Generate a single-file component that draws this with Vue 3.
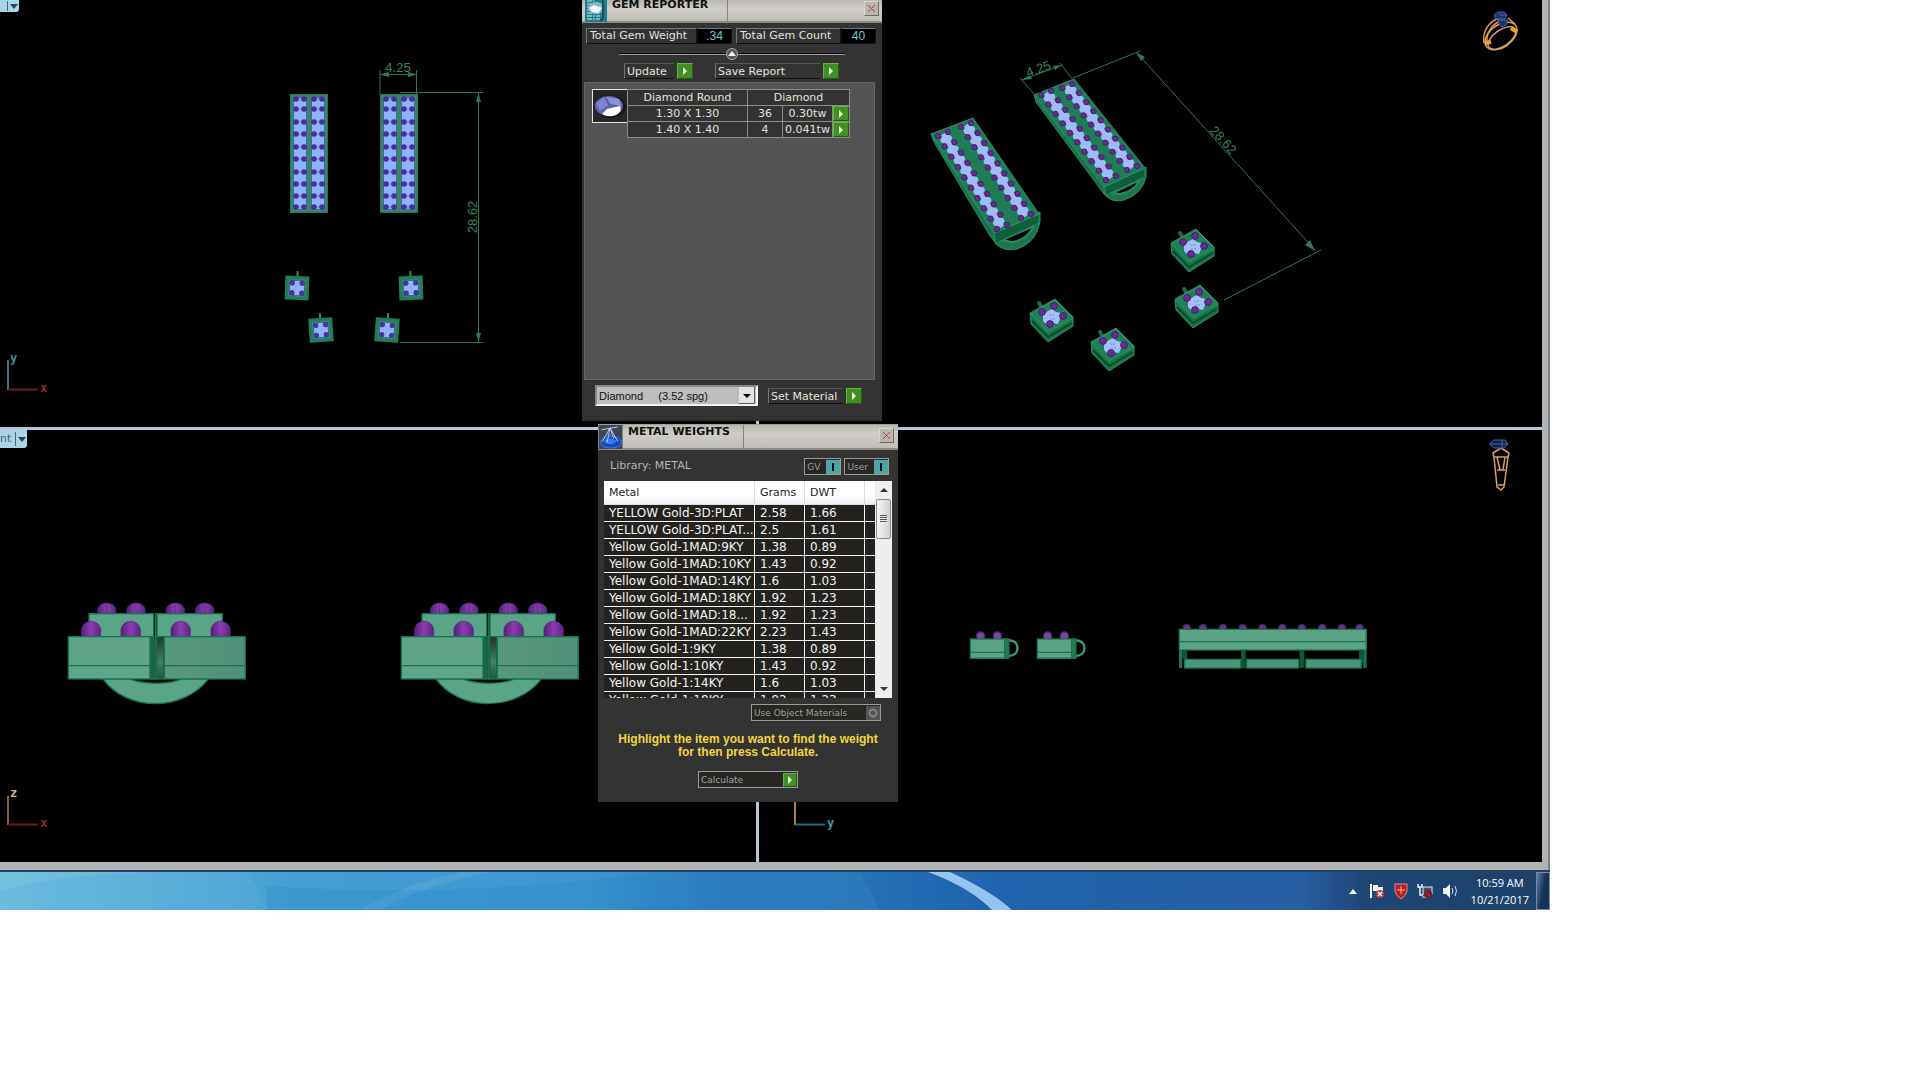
<template>
  <div class="desktop">
    <main class="cad-window">
      <div class="viewports">
        <!-- top view -->
        <section class="pane">
          <button class="view-tab view-tab-top" aria-label="Top view menu">
            <span class="view-name"></span>
            <svg width="8" height="5"><path d="M0 0 H8 L4 5 Z" fill="#33424c" /></svg>
          </button>
          <svg viewBox="0 0 756 427" class="scene">
            <g v-for="x in [290, 380]" :key="`bar-${x}`">
              <rect :x="x" y="94" width="38" height="119" fill="#1f7d58" />
              <g v-for="c in [10, 28]" :key="`ch-${c}`">
                <rect :x="x + c - 8" y="96" width="16" height="115" fill="#3d6f80" stroke="#49907a" />
                <rect :x="x + c - 6" y="98" width="12" height="111" fill="#8db4fb" />
                <g v-for="y in topRows" :key="y">
                  <rect :x="x + c - 3" :y="y - 1" width="6" height="2" fill="#a98af2" />
                  <circle :cx="x + c - 4" :cy="y" r="2.8" fill="#44309c" />
                  <circle :cx="x + c + 4" :cy="y" r="2.8" fill="#44309c" />
                </g>
              </g>
            </g>

            <g
              v-for="s in topStuds"
              :key="`stud-${s.x}-${s.y}`"
              :transform="`translate(${s.x} ${s.y}) rotate(${s.r})`"
            >
              <path d="M0 -17 V-11" stroke="#4a7f65" stroke-width="2" />
              <rect x="-12" y="-12" width="24" height="24" fill="#1f7d58" />
              <rect x="-8" y="-8" width="16" height="16" fill="#334f86" stroke="#438a70" />
              <path d="M-3 -7 H3 V-4 H7 V4 H3 V7 H-3 V4 H-7 V-4 H-3 Z" fill="#8fb2fa" />
              <circle v-for="d in corners" :key="d.join()" :cx="d[0] * 5" :cy="d[1] * 5" r="2.7" fill="#4634a0" />
            </g>

            <g stroke="#2a7a52" fill="none">
              <path d="M380 70 V94 M416.500 70 V94 M380 74.500 H416 M400 92.500 H483 M478.500 93 V342 M400 342.500 H483" />
            </g>
            <path
              d="M380 74.500 l9 -2.500 v5 z M417 74.500 l-9 -2.500 v5 z M478.500 93 l-2.500 9 h5 z M478.500 342 l-2.500 -9 h5 z"
              fill="#2a7a52"
            />
            <text x="398" y="72" text-anchor="middle" class="dim">4.25</text>
            <text transform="translate(477 217) rotate(-90)" text-anchor="middle" class="dim">28.62</text>

            <path d="M8 360 V390" stroke="#47707a" stroke-width="2" />
            <path d="M8 389.500 H38" stroke="#6e1d1d" stroke-width="2" />
            <text x="10" y="362" class="axis" fill="#4f8b96">y</text>
            <text x="40" y="392" class="axis" fill="#962a2a">x</text>
          </svg>
        </section>

        <!-- perspective view -->
        <section class="pane">
          <svg viewBox="759 0 783 427" class="scene">
            <g v-for="(b, i) in isoBars" :key="`iso-${i}`">
              <path :d="b.ring" fill="#1c7450" stroke="#2e9366" />
              <path :d="b.hole" fill="#000" stroke="#2b8a60" stroke-width="2" />
              <path :d="b.side" fill="#16704a" stroke="#238a5e" />
              <path :d="b.end" fill="#105f3c" stroke="#23885c" />
              <path :d="b.face" fill="#1f7d55" stroke="#2b9168" />
              <g v-for="(c, k) in b.channels" :key="k">
                <path
                  :d="`M${c[0]} ${c[1]} L${c[2]} ${c[3]}`"
                  stroke="#b8acf6"
                  stroke-width="5"
                />
                <ellipse
                  v-for="(p, n) in along(c, 9, 0.5)"
                  :key="`s-${n}`"
                  :cx="p.x"
                  :cy="p.y"
                  rx="6"
                  ry="4"
                  fill="#9dbcfb"
                  :transform="`rotate(-20 ${p.x} ${p.y})`"
                />
                <g v-for="(p, n) in along(c, 10, 0)" :key="`p-${n}`" fill="#682c92" stroke="#451c70">
                  <circle :cx="p.x - 5" :cy="p.y + 2" r="2.6" />
                  <circle :cx="p.x + 5" :cy="p.y - 2" r="2.6" />
                </g>
              </g>
            </g>

            <g v-for="s in isoStuds" :key="`is-${s.x}`" :transform="`translate(${s.x} ${s.y})`">
              <path d="M-13 -14 L-10 -9" stroke="#1f6b48" stroke-width="4" stroke-linecap="round" />
              <path
                d="M-22 -4 L3 -18 L21 0 V9 L-4 25 L-21 7 Z"
                fill="#197449"
                stroke="#2a9365"
                stroke-linejoin="round"
              />
              <path d="M-20 4 L-4 20 L20 6" fill="none" stroke="#0c4a2d" stroke-width="2" />
              <path d="M-21 -3 L3 -17 L21 1 L-4 15 Z" fill="#1f8055" stroke="#2b9567" />
              <path d="M0 -8 L4 -5 L9 -4 L8 2 L6 7 L0 6 L-5 8 L-9 4 L-9 -2 L-4 -6 Z" fill="#a4bffc" />
              <path d="M-3 -2 H3 M-2 2 H3" stroke="#6b95cf" stroke-dasharray="2 1" />
              <circle
                v-for="d in studProngs"
                :key="d.join()"
                :cx="d[0]"
                :cy="d[1]"
                r="3.4"
                fill="#6a2b94"
                stroke="#451c70"
              />
            </g>

            <path
              d="M1020 78 L1035 95 M1060 63 L1073 80 M1022 80 L1062 65 M1073 78 L1140 51 M1137 53 L1315 250 M1321 250 L1224 300"
              stroke="#33775a"
              fill="none"
            />
            <path
              d="M1022 80 l8 -5 l2 4 z M1062 65 l-9 1 l2 4 z M1136 52 l9 5 l-4 4 z M1315 251 l-10 -6 l5 -5 z"
              fill="#2a7d55"
            />
            <text transform="translate(1040 73) rotate(-20)" text-anchor="middle" class="dim">4.25</text>
            <text transform="translate(1220 143) rotate(48)" text-anchor="middle" class="dim">28.62</text>

            <!-- ring preview -->
            <g fill="none" stroke="#d9a066" stroke-width="1.500">
              <ellipse cx="1501" cy="36" rx="18" ry="11" transform="rotate(-35 1501 36)" />
              <ellipse cx="1502" cy="38" rx="16" ry="8" transform="rotate(-35 1502 38)" />
              <path d="M1484 43 C1482 31 1489 21 1500 18 M1487 42 C1486 33 1492 24 1502 20 M1508 18 L1515 24" />
              <path d="M1485 43 l6 -1 M1511 28 l6 4" stroke="#f0a22c" stroke-width="4" />
            </g>
            <g fill="#1d3267" stroke="#4564ad">
              <path d="M1494 15 l4 -3 h6 l3 3 l-2 4 h-9 z" />
              <path d="M1498 20 h10 l-2 5 l-4 2 l-3 -3 z M1499 15 h8" />
            </g>
          </svg>
        </section>

        <!-- front view -->
        <section class="pane">
          <button class="view-tab" aria-label="Front view menu">
            <span class="view-name">nt</span>
            <svg width="8" height="5"><path d="M0 0 H8 L4 5 Z" fill="#33424c" /></svg>
          </button>
          <svg viewBox="0 430 756 432" class="scene">
            <defs>
              <linearGradient id="shade" x1="0" y1="0" x2="1" y2="0">
                <stop offset="0%" stop-color="#57977d" />
                <stop offset="100%" stop-color="#4f9279" />
              </linearGradient>
              <linearGradient id="slot" x1="0" y1="0" x2="0" y2="1">
                <stop offset="0%" stop-color="#24342d" />
                <stop offset="60%" stop-color="#3f8066" />
                <stop offset="100%" stop-color="#1d5b40" />
              </linearGradient>
              <linearGradient id="bead" x1="0" y1="0" x2="1" y2="0">
                <stop offset="0%" stop-color="#54217a" />
                <stop offset="50%" stop-color="#8c3cb0" />
                <stop offset="100%" stop-color="#5c2684" />
              </linearGradient>
            </defs>
            <g
              v-for="x in [50, 383]"
              :key="`front-${x}`"
              :transform="`translate(${x} 590) scale(0.3333)`"
              stroke="#157350"
              stroke-width="4"
            >
              <path d="M158 266 C230 366 400 366 476 266 H396 C360 284 280 284 236 266 Z" fill="#5aa488" />
              <path
                v-for="b in [170, 258, 376, 464]"
                :key="`bk-${b}`"
                :d="`M${b - 28} 72 V60 C${b - 24} 32 ${b + 24} 32 ${b + 28} 60 V72 Z M${b} 44 V72`"
                fill="url(#bead)"
                stroke="#4a1c6e"
                stroke-width="2"
              />
              <rect x="117" y="71" width="194" height="80" fill="#5aa488" />
              <rect x="321" y="71" width="196" height="80" fill="#5aa488" />
              <path
                v-for="b in [123, 242, 392, 512]"
                :key="`fr-${b}`"
                :d="`M${b - 29} 140 V118 C${b - 24} 86 ${b + 24} 86 ${b + 29} 118 V140 Z`"
                fill="url(#bead)"
                stroke="#54237a"
                stroke-width="2"
              />
              <path d="M300 140 H345 V267 H300 Z" fill="#1a6245" />
              <rect x="322" y="142" width="17" height="122" fill="url(#slot)" stroke="none" />
              <rect x="55" y="140" width="245" height="127" fill="#5fa58a" />
              <rect x="343" y="140" width="243" height="127" fill="url(#shade)" />
              <path d="M55 227 H300 M343 227 H586 M317 68 V270" fill="none" />
            </g>
            <path d="M8 796 V825" stroke="#8a5d49" stroke-width="2" />
            <path d="M8 824.500 H38" stroke="#6e1d1d" stroke-width="2" />
            <text x="10" y="797" class="axis" fill="#d5b394">z</text>
            <text x="40" y="827" class="axis" fill="#962a2a">x</text>
          </svg>
        </section>

        <!-- right view -->
        <section class="pane">
          <svg viewBox="759 430 783 432" class="scene">
            <g transform="translate(950 610) scale(0.3333)" stroke="#1a7651" stroke-width="4">
              <g v-for="x in [0, 201]" :key="`cup-${x}`" :transform="`translate(${x} 0)`">
                <path d="M174 92 C212 86 212 142 174 137" fill="none" stroke="#3d9a77" stroke-width="7" />
                <circle v-for="b in [92, 142]" :key="b" :cx="b" cy="78" r="12" fill="#8441a0" stroke="#5c2380" />
                <rect x="61" y="87" width="115" height="58" fill="#5ba287" />
                <path d="M61 127 H176" />
                <rect x="164" y="87" width="12" height="58" fill="#277953" />
              </g>
              <circle
                v-for="b in [710, 759, 819, 878, 938, 997, 1056, 1117, 1176, 1229]"
                :key="`bd-${b}`"
                :cx="b"
                cy="54"
                r="11"
                fill="#6c3285"
                stroke="#472060"
              />
              <rect x="688" y="58" width="561" height="62" fill="#5ba287" />
              <path d="M688 95 H1249" />
              <path d="M692 120 V174 M1245 120 V174" stroke-width="10" />
              <path d="M704 120 V148 M880 120 V174 M1056 120 V174 M1234 120 V160" stroke="#0d5937" stroke-width="14" />
              <rect x="704" y="148" width="168" height="26" fill="#4b967a" />
              <rect x="890" y="148" width="156" height="26" fill="#4b967a" />
              <rect x="1068" y="148" width="166" height="26" fill="#4b967a" />
            </g>
            <path d="M795 790 V825" stroke="#a8803c" stroke-width="2" />
            <path d="M795 824.500 H825" stroke="#23707c" stroke-width="2" />
            <text x="827" y="827" class="axis" fill="#3b9aa8">y</text>

            <!-- ring side preview -->
            <g fill="none" stroke="#d9a066" stroke-width="1.500">
              <path d="M1493 453 L1501 448 L1509 453 L1508 457 H1494 Z" />
              <path d="M1494 457 L1497 487 L1501 490 L1504 487 L1508 457 M1497 457 L1500 470 M1505 457 L1503 470 M1497 470 H1505 M1498 485 H1504" />
            </g>
            <path d="M1489 444 L1494 440 H1505 L1508 444 L1504 448 H1494 Z M1491 444 H1508 M1502 440 V448" fill="#12204a" stroke="#4564ad" />
          </svg>
        </section>
      </div>
    </main>

    <!-- gem reporter -->
    <section class="panel gem-panel">
      <header class="panel-title gem-title">
        <svg class="gem-logo" width="22" height="22" viewBox="0 0 22 22">
          <rect width="22" height="22" fill="#1f7d90" />
          <path d="M2 1 H9 M2 4 H12 M2 7 H7 M2 10 H6 M2 13 H15 M2 16 H15 M2 19 H15" stroke="#d8f2f5" stroke-dasharray="5 1 2 1" />
          <ellipse cx="11" cy="8" rx="8" ry="6" fill="#8db5bd" />
          <path d="M4 8 L9 5 L17 8 L13 13 L7 12 Z" fill="#f0f6f6" />
          <path d="M18 0 V18 L15 21" stroke="#14505e" stroke-width="2" fill="none" />
        </svg>
        <h2>GEM REPORTER</h2>
        <button class="close" aria-label="Close gem reporter">
          <svg width="9" height="9"><path d="M1 1 L8 8 M8 1 L1 8" stroke="#ad4646" /></svg>
        </button>
      </header>

      <div class="totals">
        <span class="total-label">Total Gem Weight</span><output>.34</output>
        <span class="total-label second">Total Gem Count</span><output>40</output>
      </div>

      <div class="splitter">
        <button aria-label="Collapse">
          <svg width="8" height="5"><path d="M0 5 L4 0 L8 5 Z" fill="#f2f0ea" /></svg>
        </button>
      </div>

      <div class="actions">
        <button class="action"><span class="action-label update">Update</span><span class="go"></span></button>
        <button class="action"><span class="action-label save">Save Report</span><span class="go"></span></button>
      </div>

      <div class="gem-list">
        <svg class="thumb" width="36" height="34" viewBox="0 0 36 34">
          <rect x="0.500" y="0.500" width="35" height="33" fill="#262626" stroke="#e4e4e4" />
          <ellipse cx="19" cy="18" rx="15" ry="11" fill="#171717" />
          <ellipse cx="17" cy="17" rx="14" ry="10" fill="#5d62ae" />
          <path d="M4 14 L12 8 L16 16 L8 22 Z" fill="#7d84cf" />
          <path d="M14 8 L27 10 L29 17 L19 15 Z" fill="#8d96d0" />
          <path d="M10 25 L15 20 L28 17 Q31 22 24 26 Q17 29 10 25 Z" fill="#fdfdff" />
        </svg>
        <table class="gem-table">
          <colgroup>
            <col class="cut" />
            <col class="count" />
            <col class="weight" />
            <col class="pick" />
          </colgroup>
          <thead>
            <tr>
              <th>Diamond Round</th>
              <th colspan="3">Diamond</th>
            </tr>
          </thead>
          <tbody>
            <tr v-for="g in gems" :key="g.size">
              <td>{{ g.size }}</td>
              <td>{{ g.count }}</td>
              <td>{{ g.weight }}</td>
              <td><button class="go" :aria-label="`Select ${g.size}`"></button></td>
            </tr>
          </tbody>
        </table>
      </div>

      <div class="material-row">
        <div class="select-box">
          <select v-model="material" aria-label="Material">
            <option value="diamond">Diamond &nbsp;&nbsp;&nbsp; (3.52 spg)</option>
          </select>
          <svg width="16" height="17">
            <rect width="16" height="17" fill="#e6e4e0" />
            <path d="M15.500 0 V16.500 H0" stroke="#5c5c5c" fill="none" />
            <path d="M4 7 H12 L8 11 Z" />
          </svg>
        </div>
        <button class="action"><span class="action-label set">Set Material</span><span class="go"></span></button>
      </div>
    </section>

    <!-- metal weights -->
    <section class="panel metal-panel">
      <header class="panel-title metal-title">
        <svg class="metal-logo" width="25" height="24" viewBox="0 0 25 25">
          <rect width="25" height="25" fill="#3c4654" />
          <ellipse cx="13" cy="18" rx="11" ry="6" fill="#1649bd" stroke="#3c7df0" />
          <ellipse cx="12" cy="17" rx="6" ry="3" fill="#3a78ee" />
          <path d="M12 3 L4 17 M12 3 L9 18 M12 3 L20 17 M12 3 L16 14 M3 5 L20 2" stroke="#b9d0fa" fill="none" />
          <path d="M8 10 H16" stroke="#5d8be8" />
        </svg>
        <h2>METAL WEIGHTS</h2>
        <button class="close" aria-label="Close metal weights">
          <svg width="9" height="9"><path d="M1 1 L8 8 M8 1 L1 8" stroke="#ad4646" /></svg>
        </button>
      </header>

      <div class="library">
        <span class="library-name">Library: METAL</span>
        <button class="toggle">GV<i class="on"></i></button>
        <button class="toggle">User<i class="on"></i></button>
      </div>

      <div class="metal-list">
        <table class="metal-table">
          <thead>
            <tr>
              <th class="name">Metal</th>
              <th class="grams">Grams</th>
              <th class="dwt">DWT</th>
              <th></th>
            </tr>
          </thead>
          <tbody>
            <tr v-for="(m, i) in metals" :key="i">
              <td>{{ m[0] }}</td>
              <td>{{ m[1] }}</td>
              <td>{{ m[2] }}</td>
              <td></td>
            </tr>
          </tbody>
        </table>
        <div class="scrollbar">
          <svg width="8" height="4"><path d="M0 4 L4 0 L8 4 Z" fill="#333" /></svg>
          <div class="scroll-thumb"><b></b></div>
          <svg class="down" width="8" height="4"><path d="M0 0 L4 4 L8 0 Z" fill="#333" /></svg>
        </div>
      </div>

      <button class="toggle use-object">Use Object Materials<i class="off"></i></button>
      <p class="hint">Highlight the item you want to find the weight<br />for then press Calculate.</p>
      <button class="toggle calculate">Calculate<i class="go"></i></button>
    </section>

    <footer class="taskbar">
      <svg class="aero" viewBox="0 0 1550 39" preserveAspectRatio="none">
        <path d="M0 20 Q60 0 180 0 H0 Z" fill="#fff" opacity="0.08" />
        <path d="M245 0 Q262 18 266 39 H0 V0 Z" fill="#fff" opacity="0.05" />
        <path d="M380 39 Q420 15 490 0 H460 Q400 14 360 39 Z" fill="#fff" opacity="0.08" />
        <path d="M266 14 Q450 28 660 0 L680 39 H266 Z" fill="#1b7cc4" opacity="0.18" />
        <path d="M860 0 H940 Q985 20 1005 39 H880 Z" fill="#0f56a5" opacity="0.2" />
        <path d="M928 0 H950 Q992 20 1012 39 H992 Q970 16 928 0 Z" fill="#a9d5fb" opacity="0.85" />
      </svg>
      <div class="tray">
        <svg class="more" width="8" height="5"><path d="M0 5 L4 0 L8 5 Z" fill="#f2f7fb" /></svg>
        <svg width="16" height="16">
          <path d="M2 1 V15" stroke="#fff" stroke-width="2" />
          <path d="M4 2 H9 V4 H14 V10 H9 V8 H4 Z" fill="#f4f4f4" />
          <circle cx="11" cy="11" r="4" fill="#c33a34" />
          <path d="M9 9 L13 13 M13 9 L9 13" stroke="#fff" stroke-width="1.500" />
        </svg>
        <svg width="14" height="16">
          <path d="M1 1 H13 V8 Q12 13 7 16 Q2 13 1 8 Z" fill="#b81f25" stroke="#e08b83" />
          <path d="M7 3 V11 M3 7 H11" stroke="#ffb08a" />
        </svg>
        <svg width="16" height="16">
          <path d="M1 1 V4 H5 V1 M3 4 V12 H6" stroke="#f2f2f2" fill="none" stroke-width="1.500" />
          <rect x="6" y="4" width="9" height="7" fill="#3d5265" stroke="#e8e8e8" />
          <path d="M5 14 H12" stroke="#e8e8e8" />
          <circle cx="11" cy="11" r="4" fill="#7c1824" />
          <path d="M9 9 L13 13" stroke="#c0454e" />
        </svg>
        <svg width="16" height="16">
          <path d="M1 5 H4 L8 1 V15 L4 11 H1 Z" fill="#f4f4f4" />
          <path d="M10 5 Q12 8 10 11 M13 3 Q16 8 13 13" stroke="#c9dcec" fill="none" />
        </svg>
      </div>
      <time class="clock">10:59 AM<br />10/21/2017</time>
      <button class="show-desktop" aria-label="Show desktop"></button>
    </footer>
  </div>
</template>

<script setup>
import { ref } from "vue";

const material = ref("diamond");

const gems = [
  { size: "1.30 X 1.30", count: 36, weight: "0.30tw" },
  { size: "1.40 X 1.40", count: 4, weight: "0.041tw" },
];

const metals = [
  ["YELLOW Gold-3D:PLAT", "2.58", "1.66"],
  ["YELLOW Gold-3D:PLAT...", "2.5", "1.61"],
  ["Yellow Gold-1MAD:9KY", "1.38", "0.89"],
  ["Yellow Gold-1MAD:10KY", "1.43", "0.92"],
  ["Yellow Gold-1MAD:14KY", "1.6", "1.03"],
  ["Yellow Gold-1MAD:18KY", "1.92", "1.23"],
  ["Yellow Gold-1MAD:18...", "1.92", "1.23"],
  ["Yellow Gold-1MAD:22KY", "2.23", "1.43"],
  ["Yellow Gold-1:9KY", "1.38", "0.89"],
  ["Yellow Gold-1:10KY", "1.43", "0.92"],
  ["Yellow Gold-1:14KY", "1.6", "1.03"],
  ["Yellow Gold-1:18KY", "1.92", "1.23"],
];

// prong rows of the long bars
const topRows = [99, 109, 122, 134, 147, 159, 172, 184, 196, 207];

const corners = [
  [-1, -1],
  [1, -1],
  [-1, 1],
  [1, 1],
];

const topStuds = [
  { x: 297, y: 288, r: 2 },
  { x: 411, y: 288, r: -2 },
  { x: 321, y: 330, r: -4 },
  { x: 387, y: 330, r: 4 },
];

const isoBars = [
  {
    face: "M931 134 L973 118 L1039 214 L994 233 Z",
    side: "M931 134 L994 233 V241 L990 236 L934 142 Z",
    end: "M994 233 L1039 214 V223 L996 243 Z",
    ring: "M990 234 L996 244 Q1004 252 1017 249 Q1036 243 1040 222 V212 Z",
    hole: "M1002 240 L1034 226 Q1027 240 1012 242 Z",
    channels: [
      [943, 134, 1002, 227],
      [966, 125, 1026, 216],
    ],
  },
  {
    face: "M1034 95 L1074 79 L1145 168 L1104 187 Z",
    side: "M1034 95 L1104 187 V194 L1036 102 Z",
    end: "M1104 187 L1145 168 V177 L1106 195 Z",
    ring: "M1102 188 L1105 195 Q1112 203 1124 200 Q1142 194 1146 177 V167 Z",
    hole: "M1112 193 L1140 180 Q1133 192 1120 194 Z",
    channels: [
      [1046, 93, 1111, 178],
      [1067, 86, 1132, 168],
    ],
  },
];

const isoStuds = [
  { x: 1193, y: 247 },
  { x: 1197, y: 303 },
  { x: 1052, y: 317 },
  { x: 1113, y: 346 },
];

const studProngs = [
  [2, -11],
  [-10, -5],
  [11, -1],
  [-2, 7],
];

// evenly spaced points on a channel, shifted by a part of one step
const along = ([x1, y1, x2, y2], count, shift) => {
  const points = [];
  for (let i = 0; i < count; i++) {
    const t = (i + shift) / 9;
    points.push({ x: x1 + (x2 - x1) * t, y: y1 + (y2 - y1) * t });
  }
  return points;
};
</script>

<style>
body {
  margin: 0;
  background: #fff;
}
</style>

<style scoped>
.desktop {
  position: relative;
  margin-right: 370px;
  font-family: Verdana, "DejaVu Sans", sans-serif;
  font-size: 11px;
}

button {
  margin: 0;
  padding: 0;
  border: 0;
  background: none;
  font: inherit;
  color: inherit;
}

svg {
  display: block;
  flex: none;
}

.cad-window {
  padding: 0 8px 8px 0;
  background: #b0b4b7;
  box-shadow: inset -2px 0 #7d8385;
}

.viewports {
  display: grid;
  grid-template-columns: 756fr 783fr;
  gap: 3px;
  background: #b3c9d5;
}

.pane {
  position: relative;
  background: #000;
}

.scene {
  width: 100%;
  height: auto;
}

.dim {
  font: 13px "Liberation Sans", Arial, sans-serif;
  fill: #33855c;
}

.axis {
  font: bold 12px "DejaVu Sans Mono", monospace;
}

.view-tab {
  position: absolute;
  left: 0;
  top: 0;
  display: flex;
  align-items: center;
  gap: 2px;
  width: 27px;
  height: 18px;
  border-radius: 0 0 3px 0;
  background: #a8d5e8;
  color: #4a6470;
}

.view-name {
  width: 15px;
  border-right: 1px solid #4a6470;
  text-align: left;
  line-height: 14px;
}

.view-tab-top {
  width: 19px;
  height: 12px;
}

.view-tab-top .view-name {
  width: 7px;
  height: 10px;
}

/* floating tool windows */
.panel {
  position: absolute;
  width: 300px;
  background: #333;
  color: #e4e2dc;
}

.gem-panel {
  left: 582px;
  top: 0;
  height: 421px;
}

.metal-panel {
  left: 598px;
  top: 424px;
  height: 378px;
}

.panel-title {
  display: flex;
  box-sizing: border-box;
  border-bottom: 2px solid #8e8c86;
  background: linear-gradient(#b9b7b0, #cfcdc7 40%, #bfbdb6);
}

.panel-title h2 {
  box-sizing: border-box;
  width: 121px;
  margin: 0;
  padding-left: 5px;
  border-right: 1px solid #85837d;
  color: #111;
  font-size: 11px;
  line-height: 14px;
  white-space: nowrap;
}

.gem-title {
  height: 23px;
  padding: 0 3px;
}

.gem-title h2 {
  line-height: 9px;
}

.metal-title {
  height: 26px;
  padding-right: 4px;
  border-top: 1px solid #a3a19b;
}

.close {
  display: grid;
  place-items: center;
  box-sizing: border-box;
  width: 15px;
  height: 15px;
  margin: 1px 0 0 auto;
  border: 1px solid #d9d7d2;
  border-right-color: #6e6c68;
  border-bottom-color: #6e6c68;
  background: #b9b6ae;
}

.metal-title .close {
  margin-top: 3px;
}

.totals {
  display: flex;
  height: 16px;
  margin: 5px 5px 0 4px;
}

.total-label,
.totals output {
  box-sizing: border-box;
  border: 1px solid #111;
  border-top-color: #777;
  line-height: 14px;
}

.total-label {
  width: 111px;
  padding-left: 3px;
  border-left-color: #777;
  white-space: nowrap;
}

.total-label.second {
  width: 105px;
  margin-left: 4px;
}

.totals output {
  width: 35px;
  background: #000;
  color: #6fc5d0;
  font-family: "Liberation Sans", Arial, sans-serif;
  font-size: 12px;
  text-align: center;
}

.splitter {
  display: flex;
  justify-content: center;
  align-items: center;
  height: 13px;
  margin: 3px 37px;
  background: linear-gradient(#000, #000) 0 6px / 100% 1px no-repeat,
    linear-gradient(#999, #999) 0 7px / 100% 1px no-repeat;
}

.splitter button {
  display: grid;
  place-items: center;
  width: 12px;
  height: 12px;
  border: 1px solid #aaa;
  border-radius: 50%;
  background: #555;
}

.actions {
  display: flex;
  gap: 22px;
  margin-left: 42px;
}

.action {
  display: flex;
  gap: 3px;
}

.action-label {
  box-sizing: border-box;
  height: 16px;
  padding-left: 2px;
  border: 1px solid #111;
  border-left-color: #777;
  border-top-color: #555;
  border-right: 0;
  line-height: 15px;
  text-align: left;
  white-space: nowrap;
}

.update {
  width: 50px;
}

.save {
  width: 105px;
}

.set {
  width: 75px;
}

.go {
  position: relative;
  box-sizing: border-box;
  display: block;
  width: 16px;
  height: 16px;
  border: 1px solid #62b543;
  border-right-color: #245d10;
  border-bottom-color: #245d10;
  background: #3f8f22;
}

.go::after {
  content: "";
  position: absolute;
  left: 5px;
  top: 3px;
  border: 4px solid transparent;
  border-left-color: #e9f7d8;
  border-right-width: 0;
}

.gem-list {
  display: flex;
  align-items: flex-start;
  box-sizing: border-box;
  height: 298px;
  margin: 3px 7px 0 2px;
  padding: 6px 0 0 7px;
  border: 1px solid #666;
  background: #545454;
}

.thumb {
  margin-right: -1px;
}

.gem-table {
  width: 222px;
  border-collapse: collapse;
  table-layout: fixed;
  background: #333;
}

.gem-table th,
.gem-table td {
  height: 15px;
  padding: 0;
  border: 1px solid #8c8c8c;
  font-weight: normal;
  line-height: 15px;
  text-align: center;
}

.gem-table .cut {
  width: 120px;
}

.gem-table .count {
  width: 35px;
}

.gem-table .weight {
  width: 50px;
}

.gem-table .pick {
  width: 17px;
}

.gem-table .go {
  height: 15px;
}

.material-row {
  display: flex;
  align-items: center;
  gap: 10px;
  margin: 5px 0 0 13px;
}

.select-box {
  display: flex;
  align-items: center;
  box-sizing: border-box;
  width: 163px;
  height: 21px;
  padding-right: 1px;
  border: 2px solid #f2f2f2;
  border-left-color: #888;
  border-top-color: #888;
  background: #bdbdbd;
}

.select-box select {
  flex: 1;
  min-width: 0;
  padding: 0 0 0 2px;
  border: 0;
  appearance: none;
  background: none;
  color: #111;
  font: 11px "Liberation Sans", Arial, sans-serif;
}

.library {
  display: flex;
  align-items: flex-start;
  gap: 3px;
  margin: 8px 9px 6px 12px;
}

.library-name {
  flex: 1;
  padding-top: 1px;
  color: #b5b5b5;
  line-height: 14px;
}

.toggle {
  display: flex;
  align-items: center;
  justify-content: space-between;
  gap: 6px;
  box-sizing: border-box;
  height: 17px;
  padding-left: 2px;
  border: 1px solid #9a9a9a;
  background: #292724;
  color: #9f9f9f;
  font-size: 9px;
  white-space: nowrap;
}

.toggle .on,
.toggle .off {
  display: grid;
  place-items: center;
  width: 14px;
  height: 14px;
  background: #4fa5a3;
}

.toggle .on::after {
  content: "";
  width: 2px;
  height: 8px;
  background: #111;
}

.toggle .off {
  background: #555;
}

.toggle .off::after {
  content: "";
  width: 6px;
  height: 6px;
  border: 1px solid #aaa;
  border-radius: 50%;
}

.metal-list {
  display: flex;
  height: 217px;
  margin: 0 6px;
  overflow: hidden;
}

.metal-table {
  flex: 1;
  align-self: flex-start;
  border-collapse: separate;
  border-spacing: 0;
  table-layout: fixed;
  color: #f3f3f3;
}

.metal-table th {
  height: 23px;
  padding: 0 0 0 5px;
  border-right: 1px solid #ddd;
  border-bottom: 1px solid #ddd;
  background: linear-gradient(#fff 60%, #eeeff2);
  color: #222;
  font-weight: normal;
  text-align: left;
}

.metal-table th:last-child {
  border-right: 0;
}

.metal-table .name {
  width: 145px;
}

.metal-table .grams {
  width: 44px;
}

.metal-table .dwt {
  width: 54px;
}

.metal-table td {
  height: 16px;
  padding: 0 0 0 5px;
  border-right: 1px solid #f5f5f5;
  border-bottom: 1px solid #f5f5f5;
  background: #24221f;
  font-size: 12px;
  line-height: 16px;
  white-space: nowrap;
}

.metal-table td:last-child {
  border-right: 0;
}

.scrollbar {
  display: flex;
  flex-direction: column;
  align-items: center;
  width: 17px;
  padding: 7px 0;
  box-sizing: border-box;
  background: #eee;
}

.scroll-thumb {
  display: grid;
  place-items: center;
  box-sizing: border-box;
  width: 15px;
  height: 40px;
  margin-top: 7px;
  border: 1px solid #8e8e8e;
  border-radius: 2px;
  background: linear-gradient(90deg, #f4f4f4, #d0d1d4);
}

.scroll-thumb b {
  width: 7px;
  height: 8px;
  background: repeating-linear-gradient(#555 0 1px, #eee 1px 2px);
}

.scrollbar .down {
  margin-top: auto;
}

.use-object {
  width: 130px;
  margin: 6px 0 0 153px;
}

.hint {
  margin: 12px 0;
  color: #f3d53c;
  font: bold 12px/13px "Liberation Sans", Arial, sans-serif;
  text-align: center;
}

.calculate {
  width: 100px;
  margin: 0 auto;
}

.calculate .go {
  width: 14px;
  height: 14px;
}

.calculate .go::after {
  left: 4px;
  top: 2px;
}

.taskbar {
  position: relative;
  display: flex;
  align-items: center;
  justify-content: flex-end;
  height: 38px;
  border-top: 2px solid #2c4258;
  background: linear-gradient(90deg, #62b9dd, #429fd3 20%, #3c97d0 38%, #2b7cc1 46%, #2c78bd 56%, #1f63ae 65%, #255ea3 84%, #1d4675 88%, #1c426b);
}

.aero {
  position: absolute;
  inset: 0;
  width: 100%;
  height: 100%;
}

.tray {
  position: relative;
  display: flex;
  align-items: center;
  gap: 9px;
}

.more {
  margin-right: 3px;
}

.clock {
  position: relative;
  margin: 0 7px 0 13px;
  color: #fff;
  font: 11px/17px "Open Sans", "Segoe UI", sans-serif;
  text-align: center;
}

.show-desktop {
  position: relative;
  box-sizing: border-box;
  width: 14px;
  height: 38px;
  border: 1px solid #6f8fae;
  background: linear-gradient(100deg, #5d82a6, #183556 50%, #14304f);
}
</style>
